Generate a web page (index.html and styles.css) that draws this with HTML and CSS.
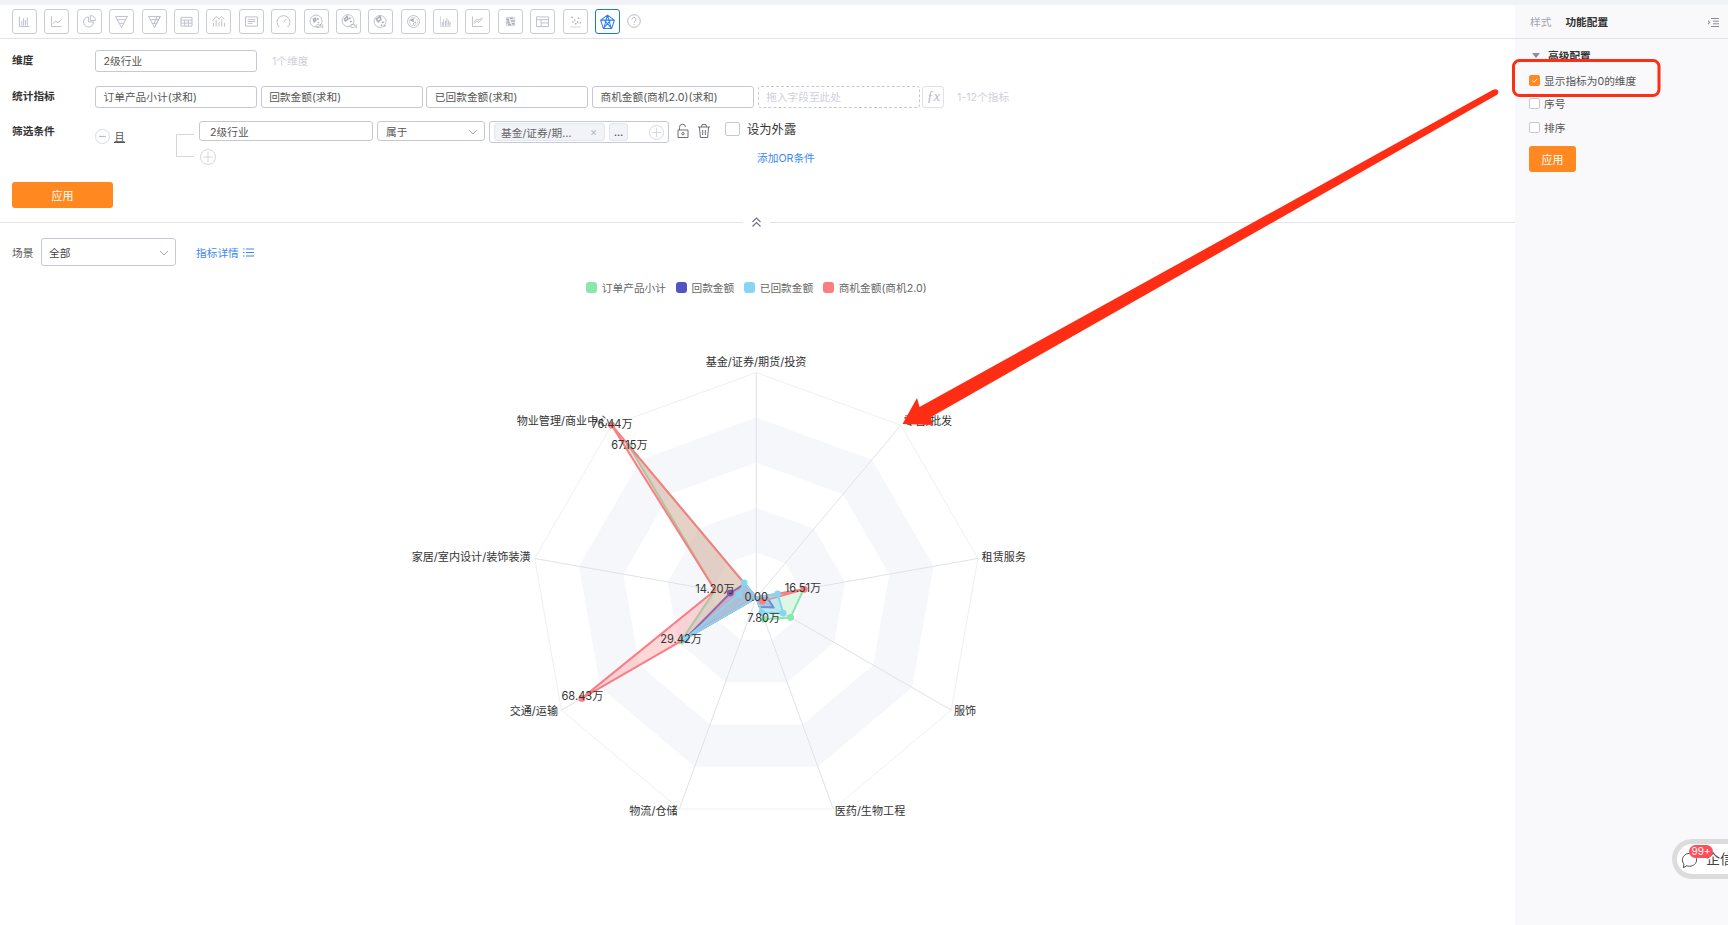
FILE: index.html
```html
<!DOCTYPE html>
<html lang="zh-CN">
<head>
<meta charset="utf-8">
<title>雷达图配置</title>
<link rel="stylesheet" href="styles.css">
</head>
<body>
<div class="app">
  <main class="main">
    <nav class="toolbar">
      <button class="tool"><svg viewBox="0 0 25 25"><path d="M7 7v11h11M9.500 12v5M11.500 9v8M13.500 11v6M15.500 8v9"/></svg></button>
      <button class="tool"><svg viewBox="0 0 25 25"><path d="M7 7v11h11M8.500 15l3-3 2.500 2 4-4"/></svg></button>
      <button class="tool"><svg viewBox="0 0 25 25"><path d="M11.500 7.500a5.500 5.500 0 1 0 5.500 5.500h-5.500zM13.500 6v5.500h5.500a5.500 5.500 0 0 0-5.500-5.500z"/></svg></button>
      <button class="tool"><svg viewBox="0 0 25 25"><path d="M6 7h13l-6.500 12zM8 10.500h9M10 14.500h5"/></svg></button>
      <button class="tool"><svg viewBox="0 0 25 25"><path d="M6 7h13l-6.500 12zM8 10.500h9M10 14.500h5M12.500 19l6-12M15 7l-3 8"/></svg></button>
      <button class="tool"><svg viewBox="0 0 25 25"><path d="M6.500 8h12v9.500h-12zM6.500 11h12M6.500 14.200h12M10.500 11v6.500M14.500 11v6.500"/></svg></button>
      <button class="tool"><svg viewBox="0 0 25 25"><path d="M7 18v-4M10 18v-7M13 18v-5M16 18v-8M19 18v-4M6 12l4-5 3 3 3-3 3 3"/></svg></button>
      <button class="tool"><svg viewBox="0 0 25 25"><path d="M6 7.500h13v10H6zM8.500 10.500h8M8.500 12.500h8M8.500 14.500h5"/></svg></button>
      <button class="tool"><svg viewBox="0 0 25 25"><path d="M8 18.500a7 7 0 1 1 9 0M12.500 13.500l3-4"/></svg></button>
      <button class="tool"><svg viewBox="0 0 25 25"><circle cx="12" cy="12" r="6.500"/><path class="thick" d="M9 10l2-1 1 2-2 2zM13 9.500l2 .5M14 13l1 1"/><text x="12" y="20" class="cn">CN</text></svg></button>
      <button class="tool"><svg viewBox="0 0 25 25"><circle cx="12" cy="11.500" r="6.500"/><path class="thick" d="M8 10l3-3 1 3-3 2zM14 13l2-1M13 9h2"/><text x="14" y="20" class="cn">CN</text></svg></button>
      <button class="tool"><svg viewBox="0 0 25 25"><circle cx="12" cy="12.500" r="6.500"/><path class="thick" d="M8 10l4-3 1 3-3 3zM14 14l2-1M13 17l1-1M16 17h2"/></svg></button>
      <button class="tool"><svg viewBox="0 0 25 25"><circle cx="12.500" cy="12.500" r="6.500"/><circle cx="12.500" cy="12.500" r="4.500" class="faint"/><path class="thick" d="M10 11l2-1v2zM14 13l1 1M12 15h1"/></svg></button>
      <button class="tool"><svg viewBox="0 0 25 25"><path class="faint" d="M7 7v11h11"/><path d="M9 13v4M10.500 10v7M12.500 12v5M14 9v8M16 11v6M17.500 13v4"/></svg></button>
      <button class="tool"><svg viewBox="0 0 25 25"><path d="M7 7v11h11M8.500 15l3-3 2.500 1.500 4-5M8.500 13l3-3 2 1 3-2" /></svg></button>
      <button class="tool"><svg viewBox="0 0 25 25"><path class="grid" d="M8 8h9v9H8z"/><path class="thick" d="M8 10h3M12 9h3M9 12h2M13 12h4M8 14h4M14 15h3M10 16h3"/></svg></button>
      <button class="tool"><svg viewBox="0 0 25 25"><path d="M6 7.500h13v10.500H6zM6 10.500h13M11 10.500V18M11 14h8"/></svg></button>
      <button class="tool"><svg viewBox="0 0 25 25"><path class="thick" d="M8 8h1.500M15 9h1.500M11 11h1.500M9 13h1.500M14 13h1.500M17 14h1.500M12 15h1.500"/><path class="faint" d="M6.500 18.500h12"/></svg></button>
      <button class="tool tool-active"><svg viewBox="0 0 25 25"><path d="M12.500 5.500l7.500 5.500-3 9H8l-3-9zM12.500 5.500l-4 14.500M12.500 5.500l4 14.500M5 11h15M8 20l8-9M17 20l-8-9"/></svg></button>
      <svg class="help" viewBox="0 0 14 14"><circle cx="7" cy="7" r="6.300"/><path d="M5 5.500a2 2 0 1 1 3 1.700c-.7.400-1 .8-1 1.600M7 10v1"/></svg>
    </nav>

    <section class="form">
      <div class="row">
        <div class="label">维度</div>
        <div class="field">2级行业</div>
        <div class="hint hint-dim">1个维度</div>
      </div>
      <div class="row row-metrics">
        <div class="label">统计指标</div>
        <div class="field">订单产品小计(求和)</div>
        <div class="field">回款金额(求和)</div>
        <div class="field">已回款金额(求和)</div>
        <div class="field">商机金额(商机2.0)(求和)</div>
        <div class="field field-drop">拖入字段至此处</div>
        <div class="fx">ƒx</div>
        <div class="hint hint-metric">1-12个指标</div>
      </div>
      <div class="row row-filter">
        <div class="label label-filter">筛选条件</div>
        <div class="logic">
          <svg class="round round-logic" viewBox="0 0 16 16"><circle cx="8" cy="8" r="7.500"/><path class="bar" d="M4.500 8h7"/></svg>
          <span class="logic-text">且</span>
        </div>
        <div class="bracket"></div>
        <div class="conds">
          <div class="cond">
            <div class="field field-name">2级行业</div>
            <div class="field field-op">属于<svg class="chev" viewBox="0 0 10 6"><path d="M1 1l4 4 4-4"/></svg></div>
            <div class="values">
              <span class="tag">基金/证券/期…<i class="tag-x">×</i></span>
              <span class="more">…</span>
              <svg class="round round-add" viewBox="0 0 16 16"><circle cx="8" cy="8" r="7.500"/><path d="M8 3v10M3 8h10"/></svg>
            </div>
            <svg class="act act-lock" viewBox="0 0 14 16"><path d="M3.500 7V4.500a3 3 0 0 1 6-.5M2 7h10v7.500H2z"/><circle cx="7" cy="10.700" r="1.200"/></svg>
            <svg class="act" viewBox="0 0 14 16"><path d="M1 4h12M4.500 4l.5-2.500h4L9.500 4M2.500 4l.8 10.500h7.400L11.500 4M5.700 7v5M8.300 7v5"/></svg>
            <span class="check-box"></span>
            <span class="expose">设为外露</span>
          </div>
          <div class="cond-add">
            <svg class="round round-more" viewBox="0 0 16 16"><circle cx="8" cy="8" r="7.500"/><path d="M8 3v10M3 8h10"/></svg>
            <a class="link link-or">添加OR条件</a>
          </div>
        </div>
      </div>
      <button class="apply apply-main">应用</button>
    </section>

    <div class="divider">
      <span class="divider-left"></span>
      <svg class="fold" viewBox="0 0 12 12"><path d="M2 6l4-4 4 4M2 10.500l4-4 4 4"/></svg>
      <span class="divider-right"></span>
    </div>

    <div class="scene">
      <span class="scene-label">场景</span>
      <div class="scene-select">全部<svg class="chev" viewBox="0 0 10 6"><path d="M1 1l4 4 4-4"/></svg></div>
      <a class="link link-detail">指标详情<svg class="list" viewBox="0 0 11 9"><path d="M0 1h1.500M3 1h8M0 4.500h1.500M3 4.500h8M0 8h1.500M3 8h8"/></svg></a>
    </div>

    <div class="legend">
      <span class="lg"><i class="sw sw-green"></i>订单产品小计</span>
      <span class="lg"><i class="sw sw-navy"></i>回款金额</span>
      <span class="lg"><i class="sw sw-sky"></i>已回款金额</span>
      <span class="lg"><i class="sw sw-red"></i>商机金额(商机2.0)</span>
    </div>

    <svg class="radar" viewBox="0 295 1515 630" width="1515" height="630">
      <defs>
        <polygon id="nona" points="0,-225 144.6,-172.4 221.6,-39.1 194.900,112.500 77,211.400 -77,211.400 -194.900,112.500 -221.600,-39.100 -144.600,-172.400"/>
      </defs>
      <g transform="translate(756.3 596.6)">
        <use href="#nona" class="ring-outer"/>
        <use href="#nona" class="band" transform="scale(.8)"/>
        <use href="#nona" class="hole" transform="scale(.6)"/>
        <use href="#nona" class="band" transform="scale(.4)"/>
        <use href="#nona" class="hole" transform="scale(.2)"/>
        <path class="axis" d="M0 0V-225M0 0L144.600-172.400M0 0L221.600-39.100M0 0L194.900 112.500M0 0L77 211.400M0 0L-77 211.400M0 0L-194.900 112.500M0 0L-221.600-39.100M0 0L-144.600-172.400"/>

        <g class="s-green">
          <polygon points="0,0 0,0 47.300,-8.300 34.300,19.800 7.900,21.600 0,0 -75,43.300 -41.400,-7.300 -127.100,-151.400"/>
          <circle cx="47.300" cy="-8.300" r="3.400"/><circle cx="34.300" cy="19.800" r="3.400"/><circle cx="7.900" cy="21.600" r="3.400"/><circle cx="-75" cy="43.300" r="3.400"/><circle cx="-127.100" cy="-151.400" r="3.400"/>
        </g>
        <g class="s-navy">
          <polygon points="0,0 0,0 9.800,-1.700 17.300,10 3.400,9.400 0,0 -71,41 -26,-4.600 -11.600,-13.800"/>
          <circle cx="-26" cy="-4.600" r="3.400"/><circle cx="-71" cy="41" r="3.400"/>
        </g>
        <g class="s-red">
          <polygon points="0,0 0,0 47.900,-8.400 6.100,3.500 0,0 0,0 -174.500,100.800 -41.200,-7.300 -144.600,-172.400"/>
          <circle cx="47.900" cy="-8.400" r="3.400"/><circle cx="-174.500" cy="100.800" r="3.400"/><circle cx="-144.600" cy="-172.400" r="3.400"/>
        </g>
        <g class="s-sky">
          <polygon points="0,0 0,0 21.400,-3.800 26.800,15.500 5.500,15 0,0 -70.100,40.500 -17.300,-3.100 -12.200,-14.600"/>
          <circle cx="21.400" cy="-3.800" r="3.400"/><circle cx="26.800" cy="15.500" r="3.400"/><circle cx="5.500" cy="15" r="3.400"/><circle cx="-70.100" cy="40.500" r="3.400"/><circle cx="-17.300" cy="-3.100" r="3.400"/><circle cx="-12.200" cy="-14.600" r="3.400"/>
        </g>
        <circle class="dot-red" cx="6.100" cy="3.500" r="3.400"/>
      </g>

      <g class="txt" transform="translate(0 -1)">
        <text x="756" y="362">基金/证券/期货/投资</text>
        <text x="563" y="421">物业管理/商业中心</text>
        <text x="928" y="421">零售/批发</text>
        <text x="530.600" y="557" class="end">家居/室内设计/装饰装潢</text>
        <text x="981.600" y="557" class="start">租赁服务</text>
        <text x="558" y="711" class="end">交通/运输</text>
        <text x="954" y="711" class="start">服饰</text>
        <text x="677.600" y="811" class="end">物流/仓储</text>
        <text x="834.700" y="811" class="start">医药/生物工程</text>
        <text x="612" y="424">76.44万</text>
        <text x="629.400" y="445">67.15万</text>
        <text x="715" y="589">14.20万</text>
        <text x="756.300" y="596.500">0.00</text>
        <text x="803" y="588">16.51万</text>
        <text x="763.700" y="617.700">7.80万</text>
        <text x="681" y="639">29.42万</text>
        <text x="582.400" y="696">68.43万</text>
      </g>
    </svg>
  </main>

  <aside class="panel">
    <div class="panel-head">
      <span class="tab">样式</span>
      <span class="tab tab-on">功能配置</span>
      <svg class="collapse" viewBox="0 0 11 9"><path d="M3 .5h8M5 3.200h6M5 5.800h6M3 8.500h8M0 2.800l2 1.700-2 1.700z"/></svg>
    </div>
    <div class="panel-body">
      <div class="panel-title"><i class="tri"></i>高级配置</div>
      <label class="opt"><span class="box box-on"><svg viewBox="0 0 12 12"><path d="M3 6l2.300 2.300L9.300 4"/></svg></span>显示指标为0的维度</label>
      <label class="opt"><span class="box"></span>序号</label>
      <label class="opt"><span class="box"></span>排序</label>
      <button class="apply apply-side">应用</button>
    </div>
  </aside>
</div>

<svg class="annot" viewBox="0 0 1728 925" width="1728" height="925">
  <rect class="annot-box" x="1513.500" y="60.500" width="145.500" height="35" rx="6"/>
  <polygon class="annot-arrow" points="902.500,424 917,398 919.500,407 1493.500,89.500 1497.500,94.500 931,417 932.500,425"/>
  <circle class="annot-arrow" cx="1495.500" cy="92" r="2.800"/>
</svg>

<div class="chat">
  <svg class="chat-ic" viewBox="0 0 18 18"><path d="M9 1.500c4.200 0 7.500 3 7.500 6.800s-3.300 6.800-7.500 6.800c-1 0-2-.2-2.900-.5L2.500 16.500l.6-3.700C2 11.600 1.500 10 1.500 8.300 1.500 4.500 4.800 1.500 9 1.500z"/></svg>
  <span class="chat-text">企信</span>
  <span class="chat-badge">99+</span>
</div>
</body>
</html>
```

FILE: styles.css
```css
* { box-sizing: border-box; }
html, body { margin: 0; height: 925px; overflow: hidden; background: #fff; }
body {
  position: relative;
  width: 1728px;
  font-family: Inter, "Noto Sans CJK SC", "Liberation Sans", sans-serif;
  font-size: 10.7px;
  color: #444;
}
button { font-family: inherit; padding: 0; margin: 0; }
a { cursor: pointer; }

.app { display: flex; height: 925px; border-top: 5px solid #f1f2f5; }
.main { width: 1515px; flex: none; display: flex; flex-direction: column; }

/* toolbar */
.toolbar {
  height: 34px;
  flex: none;
  display: flex;
  align-items: center;
  gap: 7.4px;
  padding: 0 0 1px 12px;
  border-bottom: 1px solid #e1e2ea;
}
.tool {
  width: 25px;
  height: 25px;
  background: #fff;
  border: 1px solid #c9cbd6;
  border-radius: 3px;
  display: block;
  flex: none;
}
.tool svg { display: block; width: 23px; height: 23px; fill: none; stroke: #b9bbc8; stroke-width: 1; }
.tool .thick { stroke-width: 1.6; stroke: #a9abb8; }
.tool .faint { stroke: #d2d4dd; }
.tool .grid { stroke: #d2d4dd; fill: #ecedf2; }
.tool .cn { font-size: 5.5px; fill: #9c9eac; stroke: none; font-family: "Liberation Sans", sans-serif; }
.tool-active { border-color: #1c74f2; }
.tool-active svg { stroke: #2a7ff5; stroke-width: 1.1; }
.help { width: 14px; height: 14px; margin-left: 0; fill: none; stroke: #b8bac6; stroke-width: 1; flex: none; }

/* form */
.form { padding: 11px 0 0 12px; flex: none; }
.row { display: flex; align-items: center; }
.row-metrics { margin-top: 14px; gap: 3.67px; }
.row-filter { margin-top: 13px; align-items: flex-start; }
.label { width: 83px; flex: none; font-weight: 700; color: #333; padding-bottom: 3px; }
.row-metrics .label { margin-right: -3.67px; }
.label-filter { line-height: 20px; margin-top: 1px; padding-bottom: 0; }
.field {
  width: 162px;
  height: 22px;
  flex: none;
  display: flex;
  align-items: center;
  position: relative;
  padding: 0 7.5px 2px;
  background: #fff;
  border: 1px solid #c6c8d4;
  border-radius: 3px;
  color: #555;
  white-space: nowrap;
}
.field-drop { border: 1px dashed #c6c8d4; color: #cfd1da; }
.fx {
  width: 22px;
  height: 22px;
  flex: none;
  margin-left: -1px;
  display: flex;
  align-items: center;
  justify-content: center;
  border: 1px solid #dfe0e8;
  border-radius: 3px;
  font: italic 14px "Liberation Serif", serif;
  color: #b5b7c3;
}
.hint { color: #cfd1da; padding-bottom: 2px; }
.hint-dim { margin-left: 15px; }
.hint-metric { margin-left: 9px; }

.logic { width: 81px; flex: none; display: flex; align-items: center; margin-top: 8px; gap: 4px; }
.logic-text { font-size: 11px; line-height: 14px; color: #555; text-decoration: underline; }
.round { width: 16px; height: 16px; flex: none; fill: none; stroke: #d5d7df; stroke-width: 1; }
.round-logic { width: 15px; height: 15px; }
.round .bar { stroke: #b9bbc6; stroke-width: 1.4; }
.bracket {
  width: 18px;
  height: 23px;
  flex: none;
  margin-top: 13px;
  border: 1px solid #d5d7df;
  border-right: 0;
}
.conds { margin-left: 5px; flex: 1; }
.cond { display: flex; align-items: flex-start; }
.field-name { width: 174px; height: 20px; padding: 0 0 0 10px; }
.field-op { width: 108px; height: 20px; margin-left: 4px; padding: 0 0 0 8px; }
.chev { position: absolute; right: 6px; top: 50%; width: 10px; height: 6px; margin-top: -2px; fill: none; stroke: #a5a7b4; stroke-width: 1; }
.values {
  width: 180px;
  height: 22px;
  margin-left: 4px;
  flex: none;
  display: flex;
  align-items: center;
  position: relative;
  padding-left: 4px;
  border: 1px solid #c6c8d4;
  border-radius: 3px;
}
.tag {
  width: 111px;
  height: 18px;
  display: flex;
  align-items: center;
  position: relative;
  padding-left: 6px;
  background: #f1f3f9;
  border: 1px solid #e2e5ee;
  border-radius: 3px;
  color: #666;
}
.tag-x { position: absolute; right: 7px; font-style: normal; color: #b5b7c3; }
.more {
  width: 19px;
  height: 18px;
  margin-left: 4px;
  display: flex;
  align-items: center;
  justify-content: center;
  background: #f1f3f9;
  border: 1px solid #e2e5ee;
  border-radius: 3px;
}
.round-add { width: 15px; height: 15px; margin-left: 21px; }
.act { width: 14px; height: 16px; flex: none; margin-top: 2px; fill: none; stroke: #6c6e78; stroke-width: 1; }
.act-lock { margin-left: 7px; margin-right: 7px; }
.check-box {
  width: 15px;
  height: 14px;
  margin-left: 14px;
  margin-top: 1px;
  flex: none;
  border: 1px solid #c6c8d4;
  border-radius: 2px;
}
.expose { margin-left: 7px; font-size: 12.300px; line-height: 18px; color: #333; }
.cond-add { display: flex; align-items: center; margin-top: 6px; height: 16px; }
.round-more { margin-left: 1px; }
.link { color: #3b87f5; }
.link-or { margin-left: 541px; }

.apply {
  display: block;
  height: 26px;
  background: #ff8820;
  border: 0;
  border-radius: 3px;
  color: #fff;
  font-size: 11px;
}
.apply-main { width: 101px; margin-top: 17px; }
.apply-side { width: 47px; margin-top: 7px; }

.divider { display: flex; align-items: center; height: 12px; margin-top: 8px; flex: none; }
.divider-left { width: 743px; height: 1px; background: #e1e2ea; }
.divider-right { flex: 1; height: 1px; background: #e1e2ea; }
.fold { width: 27px; height: 12px; fill: none; stroke: #6f7180; stroke-width: 1.100; }

.scene { display: flex; align-items: center; height: 28px; margin-top: 10px; padding-left: 12px; flex: none; }
.scene-label { width: 29px; color: #555; flex: none; }
.scene-select {
  width: 135px;
  height: 28px;
  flex: none;
  position: relative;
  display: flex;
  align-items: center;
  padding-left: 7px;
  border: 1px solid #c6c8d4;
  border-radius: 3px;
  color: #444;
}
.link-detail { margin-left: 20px; display: flex; align-items: center; gap: 4px; }
.list { width: 11px; height: 9px; fill: none; stroke: #3b87f5; stroke-width: 1; }

.legend { display: flex; justify-content: center; gap: 10px; height: 18px; margin-top: 12px; flex: none; color: #666; padding-right: 2px; }
.lg { display: flex; align-items: center; gap: 4.5px; }
.sw { width: 11px; height: 11px; border-radius: 3px; flex: none; }
.sw-green { background: #8ae6ac; }
.sw-navy { background: #5353c6; }
.sw-sky { background: #87d5f3; }
.sw-red { background: #fb7d80; }

/* radar */
.radar { display: block; flex: none; }
.radar use { vector-effect: non-scaling-stroke; }
.ring-outer { fill: #fff; stroke: #eff0f4; stroke-width: 1; }
.band { fill: #f6f7fb; }
.hole { fill: #fff; }
.axis { stroke: #e0e2ea; stroke-width: 1; fill: none; }
.s-green polygon { fill: rgba(138, 230, 172, .3); stroke: #8ae6ac; stroke-width: 2; stroke-linejoin: round; }
.s-green circle { fill: #8ae6ac; }
.s-navy polygon { fill: rgba(83, 83, 198, .3); stroke: #6a5cc0; stroke-width: 2; stroke-linejoin: round; }
.s-navy circle { fill: #4a46c4; }
.s-red polygon { fill: rgba(251, 125, 128, .3); stroke: #fb7d80; stroke-width: 2; stroke-linejoin: round; }
.s-red circle, .dot-red { fill: #fb7d80; }
.s-sky polygon { fill: rgba(135, 213, 243, .4); stroke: #87d5f3; stroke-width: 2; stroke-linejoin: round; }
.s-sky circle { fill: #87d5f3; }
.txt text { font-size: 11.1px; fill: #333; text-anchor: middle; dominant-baseline: central; }
.txt .end { text-anchor: end; }
.txt .start { text-anchor: start; }

/* right panel */
.panel { flex: 1; background: #f9f9fb; }
.panel-head {
  height: 34px;
  position: relative;
  display: flex;
  align-items: center;
  gap: 14px;
  padding: 0 0 0 15px;
  border-bottom: 1px solid #e1e2ea;
}
.tab { color: #a3a5b0; }
.tab-on { color: #333; font-weight: 700; }
.collapse { position: absolute; right: 9px; top: 13px; width: 11px; height: 9px; fill: none; stroke: #8b8d99; stroke-width: 1; }
.panel-body { padding: 8px 0 0 14px; }
.panel-title { height: 16px; display: flex; align-items: center; font-weight: 700; color: #333; padding-left: 19px; position: relative; }
.tri { position: absolute; left: 3px; top: 6px; border: 4px solid transparent; border-top: 5px solid #8b8d99; border-bottom: 0; }
.panel-title + .opt { margin-top: 5px; margin-bottom: -1px; }
.opt { display: flex; align-items: center; gap: 4px; height: 24px; color: #555; }
.box { width: 11px; height: 11px; flex: none; background: #fff; border: 1px solid #c6c8d4; border-radius: 2px; display: block; }
.box-on { background: #ff8820; border-color: #ff8820; }
.box-on svg { display: block; width: 9px; height: 9px; fill: none; stroke: #fff; stroke-width: 1.200; }

/* annotation and floating widget */
.annot { position: absolute; left: 0; top: 0; pointer-events: none; }
.annot-box { fill: none; stroke: #ff2d14; stroke-width: 3; }
.annot-arrow { fill: #ff2d14; }
.chat {
  position: absolute;
  right: 0;
  top: 839px;
  width: 56px;
  height: 40px;
  background: #fff;
  border: 5px solid #dcdcdc;
  border-right: 0;
  border-radius: 20px 0 0 20px;
}
.chat-ic { position: absolute; left: 4px; top: 8px; width: 17px; height: 17px; fill: none; stroke: #444; stroke-width: 1; }
.chat-text { position: absolute; left: 29px; top: 6px; width: 22px; overflow: hidden; white-space: nowrap; font-size: 14px; line-height: 18px; color: #444; }
.chat-badge {
  position: absolute;
  left: 12px;
  top: 1px;
  width: 24px;
  height: 13px;
  background: #ff4d5a;
  border-radius: 7px;
  color: #fff;
  font-size: 10px;
  line-height: 13px;
  text-align: center;
}
```
